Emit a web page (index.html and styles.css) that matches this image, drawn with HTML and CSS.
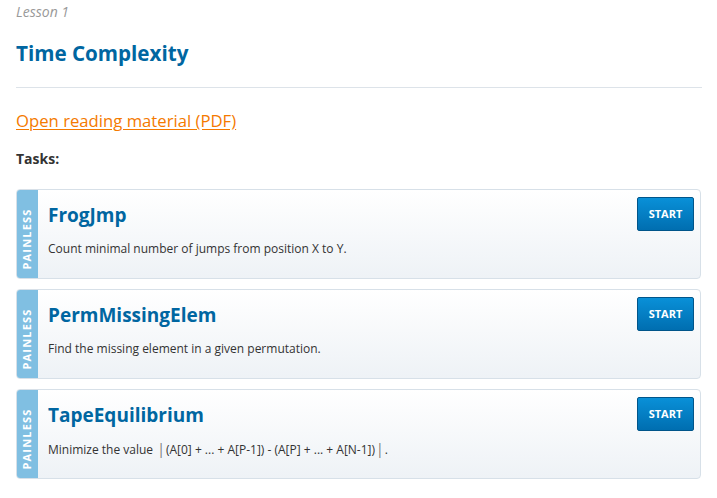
FILE: index.html
```
<!DOCTYPE html>
<html>
<head>
<meta charset="utf-8">
<link rel="stylesheet" href="styles.css">
</head>
<body>
<div class="page">
  <div class="lesson">Lesson 1</div>
  <h1 class="title">Time Complexity</h1>
  <div class="rule"></div>
  <a class="pdf" href="#">Open reading material (PDF)</a>
  <div class="tasks-label">Tasks:</div>
  <div class="tasks">
    <div class="card">
      <div class="level"><span>PAINLESS</span></div>
      <div class="body">
        <div class="info">
          <div class="name">FrogJmp</div>
          <div class="desc">Count minimal number of jumps from position X to Y.</div>
        </div>
        <a class="start" href="#">START</a>
      </div>
    </div>
    <div class="card">
      <div class="level"><span>PAINLESS</span></div>
      <div class="body">
        <div class="info">
          <div class="name">PermMissingElem</div>
          <div class="desc">Find the missing element in a given permutation.</div>
        </div>
        <a class="start" href="#">START</a>
      </div>
    </div>
    <div class="card">
      <div class="level"><span>PAINLESS</span></div>
      <div class="body">
        <div class="info">
          <div class="name">TapeEquilibrium</div>
          <div class="desc">Minimize the value <span class="abs">|</span>(A[0] + ... + A[P-1]) - (A[P] + ... + A[N-1])<span class="abs">|</span>.</div>
        </div>
        <a class="start" href="#">START</a>
      </div>
    </div>
  </div>
</div>
</body>
</html>
```
FILE: styles.css
```
* { box-sizing: border-box; }
html, body { margin: 0; padding: 0; background: #fff; }
body { font-family: "Open Sans", "Noto Sans", sans-serif; color: #333; }
.page { padding: 0 15px 0 16px; }
.lesson { font-size: 14px; font-style: italic; color: #999; line-height: 20px; margin-top: 2px; }
.title { margin: 18px 0 0 0; font-size: 20.6px; font-weight: 700; color: #0066a1; line-height: 27px; }
.rule { height: 1px; background: #dde3e9; margin-top: 20px; }
.pdf { display: inline-block; margin-top: 22px; font-size: 16.7px; line-height: 22px; color: #f47a00; text-decoration: underline; text-underline-offset: 2px; }
.tasks-label { margin-top: 17px; font-size: 14px; font-weight: 700; color: #333; line-height: 19px; }
.tasks { margin-top: 21px; display: flex; flex-direction: column; gap: 10px; width: 685px; }
.card { display: flex; height: 90px; border: 1px solid #d7e0e8; border-radius: 4px; background: linear-gradient(#ffffff, #eef2f6); overflow: hidden; }
.level { width: 22px; margin: -1px 0 -1px -1px; background: #80bfe2; display: flex; align-items: center; justify-content: center; border-radius: 4px 0 0 4px; flex: none; }
.level span { transform: rotate(-90deg) translateX(-5px); color: #fff; font-size: 11px; font-weight: 700; letter-spacing: 1.2px; white-space: nowrap; line-height: 12px; }
.body { flex: 1; display: flex; justify-content: space-between; align-items: flex-start; padding: 7px 6px 0 10px; }
.name { font-size: 19px; font-weight: 700; color: #0066a1; line-height: 27px; margin-top: 5px; }
.desc { font-size: 12px; color: #333; margin-top: 12px; line-height: 16px; }
.abs { font-size: 14px; color: #777; padding: 0 1px; }
.start { display: block; width: 57px; height: 34px; line-height: 32px; text-align: center; background: linear-gradient(#0990d8, #006eb0); border: 1px solid #00558a; border-radius: 2px; color: #fff; font-size: 11px; font-weight: 700; text-decoration: none; }
```
